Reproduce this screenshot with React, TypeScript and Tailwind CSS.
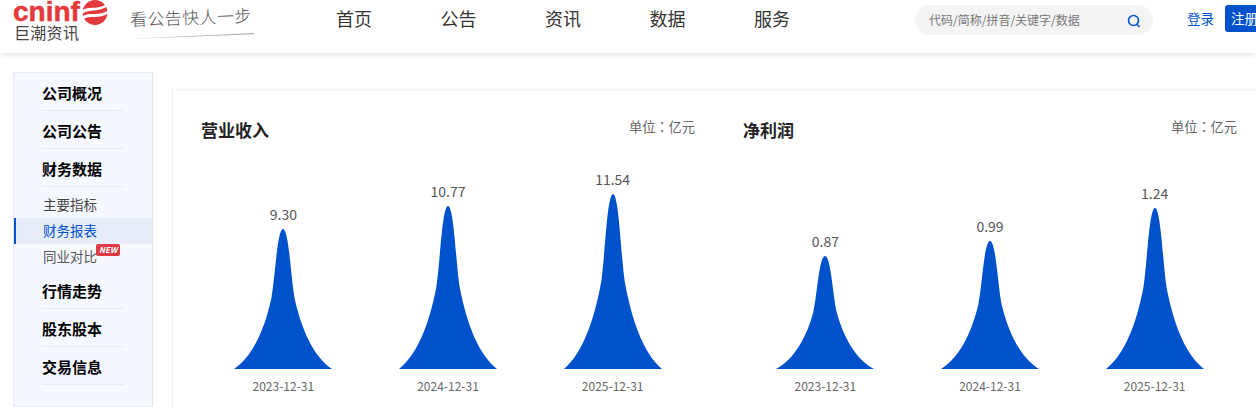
const navItems = ["首页", "公告", "资讯", "数据", "服务"];

type Bar = { value: string; date: string; height: string };

const revenue: Bar[] = [
  { value: "9.30", date: "2023-12-31", height: "h-[140px]" },
  { value: "10.77", date: "2024-12-31", height: "h-[163px]" },
  { value: "11.54", date: "2025-12-31", height: "h-[175px]" },
];

const profit: Bar[] = [
  { value: "0.87", date: "2023-12-31", height: "h-[113px]" },
  { value: "0.99", date: "2024-12-31", height: "h-[128px]" },
  { value: "1.24", date: "2025-12-31", height: "h-[161px]" },
];

function Logo() {
  return (
    <div className="flex w-[110px] shrink-0 flex-col">
      <div className="flex h-[24px]">
        <span className="w-[68px] font-['Liberation_Sans',sans-serif] text-[28px] leading-[24px] font-bold text-[#e4393c] [-webkit-text-stroke:0.5px_#e4393c]">cninf</span>
        <svg viewBox="0 0 28 25" className="h-[25px] w-[28px]">
          <circle cx="14" cy="12.5" r="12.5" fill="#e4393c" />
          <path d="M0 11 C8 5 16 11 27 3 L27 6 C17 13 9 8 1 14 Z" fill="#fff" />
          <path d="M0 17 C9 11 18 17 28 10 L28 13 C18 20 9 14 1 20 Z" fill="#fff" />
        </svg>
      </div>
      <span className="pl-[1px] text-[16px] leading-[16px] tracking-[0.3px] text-[#444]">巨潮资讯</span>
    </div>
  );
}

function Slogan() {
  return (
    <div className="mt-[5px] ml-[5px] flex w-[126px] shrink-0 flex-col">
      <span className="-rotate-2 pl-[2px] text-[17px] leading-[24px] font-light tracking-[0.4px] whitespace-nowrap text-[#555]">看公告快人一步</span>
      <svg viewBox="0 0 126 8" className="mt-[3px] h-[8px] w-[126px]">
        <path d="M0 7 L126 1 L126 2.2 Z" fill="#aaa" />
      </svg>
    </div>
  );
}

function Header() {
  return (
    <header className="flex h-[53px] shrink-0 items-start bg-white shadow-[0_2px_6px_rgba(0,0,0,0.1)]">
      <div className="ml-[13px] flex shrink-0 items-start">
        <Logo />
        <Slogan />
      </div>
      <nav className="ml-[82px] flex h-[36px] w-[454px] shrink-0 items-center justify-between text-[18px] text-[#333]">
        {navItems.map((item) => (
          <span key={item}>{item}</span>
        ))}
      </nav>
      <div className="mt-[5px] ml-[125px] flex h-[30px] w-[238px] shrink-0 items-center justify-between rounded-full bg-[#f4f4f5] pr-[12px] pl-[14px]">
        <span className="text-[12px] text-[#777]">代码/简称/拼音/关键字/数据</span>
        <svg viewBox="0 0 14 14" className="mt-[2px] h-[14px] w-[14px] fill-none stroke-[#0052cc] stroke-[1.6]">
          <circle cx="6.5" cy="6.5" r="5" />
          <path d="M10 10.5 L12.5 13" />
        </svg>
      </div>
      <span className="ml-[34px] flex h-[37px] shrink-0 items-center text-[13.5px] whitespace-nowrap text-[#0052cc]">登录</span>
      <span className="mt-[5px] ml-[11px] flex h-[27px] w-[40px] shrink-0 items-center rounded-[3px] bg-[#0052cc] pl-[6px] text-[13.5px] whitespace-nowrap text-white">注册</span>
    </header>
  );
}

function Sidebar() {
  const group = (label: string) => (
    <div key={label} className="mx-[28px] flex h-[38px] items-center border-b border-[#e8eaee] pt-[3px] text-[15px] font-bold text-black">
      {label}
    </div>
  );

  return (
    <aside className="w-[140px] shrink-0 self-stretch border border-[#e6e9f0] bg-[#f5f8ff]">
      {group("公司概况")}
      {group("公司公告")}
      {group("财务数据")}
      <div className="flex flex-col pt-[5px] pb-[1px] text-[13.5px]">
        <span className="flex h-[26px] items-center pb-[2px] pl-[29px] text-[#444]">主要指标</span>
        <span className="flex h-[26px] items-center border-l-2 border-[#0052cc] bg-[#e6edf8] pb-[2px] pl-[27px] text-[#0052cc]">财务报表</span>
        <span className="relative flex h-[26px] items-center pb-[2px] pl-[29px] text-[#555]">
          同业对比
          <span className="absolute top-[0px] left-[82px] rounded-[2px] bg-[#dd3a45] px-[3px] text-[8px] leading-[12px] font-bold text-white italic">NEW</span>
        </span>
      </div>
      {group("行情走势")}
      {group("股东股本")}
      {group("交易信息")}
    </aside>
  );
}

function Spike({ height }: { height: string }) {
  return (
    <svg viewBox="0 0 100 100" preserveAspectRatio="none" className={`w-[98px] ${height}`}>
      <path d="M0 100 C19 91 31 72 38 50 C42 35 44 0 50 0 C56 0 58 35 62 50 C69 72 81 91 100 100 Z" fill="#0052cc" />
    </svg>
  );
}

function Chart({ title, bars }: { title: string; bars: Bar[] }) {
  return (
    <section className="w-[494px] shrink-0">
      <div className="flex items-start justify-between">
        <h2 className="text-[17px] leading-[30px] font-bold text-[#222]">{title}</h2>
        <span className="mt-[2px] font-['Noto_Sans_CJK_TC',sans-serif] text-[13.2px] leading-[20px] text-[#666]">单位：亿元</span>
      </div>
      <div className="grid h-[224px] grid-cols-3 items-end">
        {bars.map((bar) => (
          <div key={bar.date} className="flex flex-col items-center">
            <span className="mb-[5px] text-[14px] leading-[20px] text-[#555]">{bar.value}</span>
            <Spike height={bar.height} />
          </div>
        ))}
      </div>
      <div className="mt-[9px] grid grid-cols-3">
        {bars.map((bar) => (
          <span key={bar.date} className="text-center text-[12px] leading-[16px] text-[#666]">
            {bar.date}
          </span>
        ))}
      </div>
    </section>
  );
}

export default function App() {
  return (
    <div className="flex h-[407px] w-[1256px] flex-col overflow-hidden bg-white font-['Noto_Sans_CJK_SC','Noto_Sans',sans-serif]">
      <Header />
      <main className="flex flex-1 pt-[19px] pl-[13px]">
        <Sidebar />
        <div className="mt-[17px] ml-[19px] flex flex-1 gap-[48px] border-t border-l border-[#eceef2] pt-[25px] pl-[28px]">
          <Chart title="营业收入" bars={revenue} />
          <Chart title="净利润" bars={profit} />
        </div>
      </main>
    </div>
  );
}
